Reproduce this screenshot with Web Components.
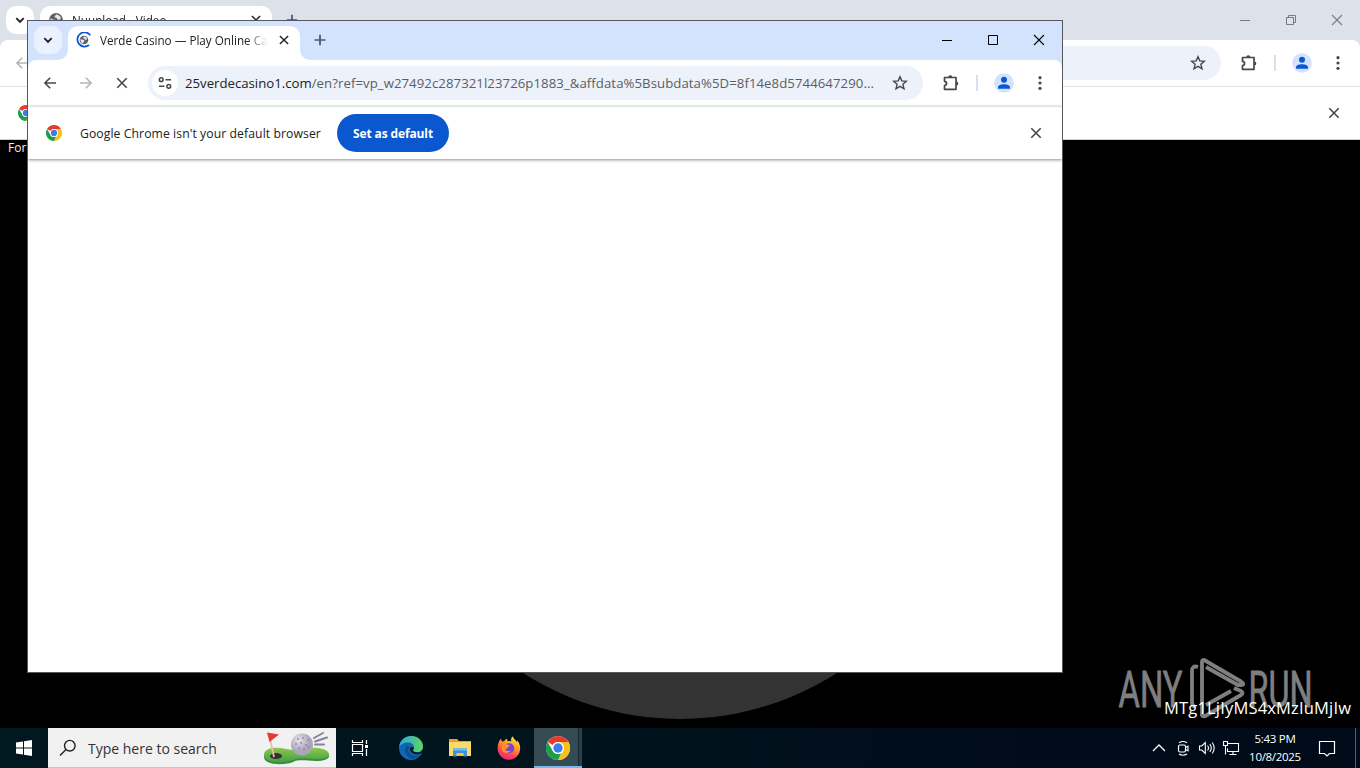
<!DOCTYPE html>
<html lang="en">
<head>
<meta charset="utf-8">
<title>Desktop</title>
<style>
  body { margin: 0; overflow: hidden; background: #000; font-family: "Open Sans", "Noto Sans", sans-serif; }
</style>
</head>
<body>
<desk-top>
  <browser-window class="back" inactive>
    <span slot="title">Nuupload - Video</span>
  </browser-window>
  <browser-window class="front">
    <span slot="title">Verde Casino — Play Online Casino</span>
    <span slot="domain">25verdecasino1.com</span>
    <span slot="path">/en?ref=vp_w27492c287321l23726p1883_&amp;affdata%5Bsubdata%5D=8f14e8d5744647290...</span>
  </browser-window>
  <brand-mark slot="mark"></brand-mark>
  <task-bar slot="bar"></task-bar>
</desk-top>

<script>
const CHROME = `
  <circle cx="12" cy="12" r="12" fill="#fff"/>
  <path fill="#e33b2e" d="M12 0a12 12 0 0 1 10.4 6H12a6 6 0 0 0-5.2 3L1.6 6A12 12 0 0 1 12 0z"/>
  <path fill="#fbc116" d="M22.4 6A12 12 0 0 1 12 24l5.2-9A6 6 0 0 0 17.2 9L12 6z"/>
  <path fill="#1e9e4a" d="M1.6 6l5.2 9A6 6 0 0 0 12 18a6 6 0 0 0 3.5-1L12 24A12 12 0 0 1 1.6 6z"/>
  <circle cx="12" cy="12" r="5.900" fill="#fff"/><circle cx="12" cy="12" r="4.700" fill="#3b7de9"/>`;

const GLOBE = `<circle cx="8" cy="8" r="6.9" fill="#5f6368"/>
  <path fill="#e8eaed" d="M2.5 6.5l3 1.2 2.6.2.6 2.3-1.7 1.5-.3 2.1C4 13 2 10.500 2.500 6.500zM8 2.500c2 .2 4 1.300 5 3.500l-1.700 2-2-.8-.7-1.500-2.200-.4z"/>`;

// [viewBox size, markup]; strokes and fills use currentColor unless the artwork is coloured
const ICONS = {
  chevronDown: [16, '<path d="M4.300 6.200 8 9.900l3.700-3.700" stroke-width="1.900"/>'],
  back: [16, '<path d="M14 8H3M8.200 2.700 2.900 8l5.300 5.300" stroke-width="1.600"/>'],
  forward: [16, '<path d="M2 8h11M7.800 2.700 13.100 8l-5.300 5.300" stroke-width="1.600"/>'],
  close: [16, '<path d="m3.300 3.300 9.400 9.400M12.700 3.300l-9.400 9.400" stroke-width="1.600"/>'],
  plus: [16, '<path d="M8 2.700v10.600M2.700 8h10.600" stroke-width="1.700"/>'],
  tune: [16, '<circle cx="4.200" cy="4.700" r="1.900" stroke-width="1.500"/><path d="M8.500 4.700H14M2 11.300h5.500" stroke-width="1.600"/><circle cx="11.800" cy="11.300" r="1.900" stroke-width="1.500"/>'],
  star: [16, '<path d="m8 1.700 1.800 4.200 4.600.4-3.500 3 1.100 4.500L8 11.400l-4 2.400 1.100-4.500-3.500-3 4.600-.4z" stroke-width="1.400"/>'],
  puzzle: [18, '<path d="M2.500 3.500H14v11.800H2.500v-3.800c2.800-.5 2.800-3.700 0-4.200z" stroke-width="1.700" stroke-linejoin="round"/><path d="M6.300 3.200a2 2 0 0 1 4 0zM14.300 7.400a2 2 0 0 1 0 4z" fill="currentColor" stroke="none"/>'],
  dots: [16, '<g fill="currentColor" stroke="none"><circle cx="8" cy="2.700" r="1.600"/><circle cx="8" cy="8" r="1.600"/><circle cx="8" cy="13.300" r="1.600"/></g>'],
  person: [20, '<g stroke="none"><circle cx="10" cy="10" r="9.800" fill="#d3e3fd"/><circle cx="10" cy="6.800" r="3" fill="#0b57d0"/><path d="M4 15.800v-1.500C4 12 7.500 11.200 10 11.200s6 .8 6 3.100v1.500z" fill="#0b57d0"/></g>'],
  min: [12, '<path d="M1 6.500h10" stroke-width="1"/>'],
  max: [12, '<path d="M1.500 1.500h9v9h-9z" stroke-width="1"/>'],
  restore: [12, '<path d="M1.500 3.500h7v7h-7zM3.500 3.500v-2h7v7h-2" stroke-width="1"/>'],
  exit: [12, '<path d="m1 1 10 10M11 1 1 11" stroke-width="1.100"/>'],
  chrome: [24, `<g stroke="none">${CHROME}</g>`],
  globe: [16, `<g stroke="none">${GLOBE}</g>`],
  loading: [16, `<g stroke="none" transform="translate(3 3) scale(.62)">${GLOBE}</g><path d="M14.200 3.200A7.100 7.100 0 1 0 13 13" stroke="#0b57d0" stroke-width="1.800"/>`],
  windows: [16, '<path fill="currentColor" stroke="none" d="M0 2.400 7 1.400v6.100H0zM8 1.200 16 0v7.500H8zM0 8.500h7v6.100l-7-1zM8 8.500h8V16l-8-1.200z"/>'],
  search: [18, '<circle cx="10.800" cy="6.700" r="5.300" stroke-width="1.400"/><path d="m7 10.500-6 6" stroke-width="1.400"/>'],
  taskView: [18, '<path d="M1.500 1v2.500h10V1M1.500 17v-2.500h10V17M1.500 5.500h10v7h-10zM15.500 1v4M15.500 10v7" stroke-width="1.200"/><path d="M14 6h3v3h-3z" fill="currentColor" stroke="none"/>'],
  edge: [24, `<g stroke="none">
    <linearGradient id="a" x1="0" x2="1"><stop offset="0" stop-color="#2aa8df"/><stop offset="1" stop-color="#61d65b"/></linearGradient>
    <circle cx="12" cy="12" r="12" fill="#1267b5"/>
    <path fill="url(#a)" d="M.1 11C.9 4.500 6 0 12.300 0 19 0 24 5 24 10.500c0 3.500-2.600 5.800-6 5.800-2.500 0-4-.9-4-2 0-.8 1-1.300 1-3C15 8.500 12.500 6.500 9 6.500c-4 0-7.600 2-8.900 4.500z"/>
    <path fill="#0c4f8f" d="M8 9.500c-3.500 2.500-2.800 9 3 12.500 3.700 1.500 8 .2 10.500-3.200-5 2-10.500.7-12-3.300-.6-2-.2-3.500 1-5z"/>
    <path fill="#031c26" d="M11 11.500c-.8 3 1.300 6.200 5.200 6.800 2.800.4 5-.3 6.300-1.200.6-.4 1 .1.600.8 1-1.300 1-3 .8-5-1.200 2.500-3.300 3.400-6 3.400-2.500 0-3.900-.9-3.900-2 0-.8 1-1.300 1-3-2 0-3.500 0-4 .2z"/></g>`],
  folder: [24, `<g stroke="none"><path fill="#e8a317" d="M1 3h8l2 2h12v3H1z"/><path fill="#ffd968" d="M1 6h22v14H1z"/>
    <path fill="#3d93d0" d="M5 12h14v8.500h-3.500V17h-7v3.500H5z"/><path fill="#76bce8" d="M5 12h14v2.500H5z"/><path fill="#f5c343" d="M9 17h6v3H9z"/></g>`],
  firefox: [24, `<g stroke="none">
    <linearGradient id="f" x1=".8" y1="0" x2=".3" y2="1"><stop offset="0" stop-color="#fff04a"/><stop offset=".4" stop-color="#ff9a25"/><stop offset=".75" stop-color="#ff4055"/><stop offset="1" stop-color="#e32a87"/></linearGradient>
    <path fill="url(#f)" d="M4 2.500c0 1.200.4 2 .9 2.700l2.300.1C8 3.800 9 3 10.200 2.700c-.3 1 .1 2 .8 2.500 1.400-.2 2.300-.2 3.300.2C13.500 3.500 14.500 1.200 16 .3c.2 2.500 2.500 3.700 4 5.800.3-.6.300-1.200.2-1.900 1.900 2.200 3 5 3 8A11.300 11.300 0 0 1 .6 12.500C.6 9 1.500 5 4 2.500z"/>
    <circle cx="12.200" cy="12.200" r="5" fill="#7542d8"/>
    <path fill="#ff9328" d="M5.500 8.600c2-1.300 3.500-.7 4.600 0 1.500 0 2.600.2 2.700.8-.1 1-2 1.200-2.300 2-.3 1.400-1.500 1.800-2.800 1.400 1 2.200 3.500 3 6 1.600-1.200 3.200-6 3.500-8 .6C4.500 13 4.300 10.500 5.500 8.600z"/></g>`],
  caret: [16, '<path d="m2 11 6-6 6 6" stroke-width="1.300"/>'],
  camera: [16, '<rect x="3.500" y="5" width="7" height="7" rx="1.500" stroke-width="1.200"/><path d="m10.500 7.500 2.500-1.300v4.600l-2.500-1.300M4 2.700Q8 .2 12 2.700M4 14q4 2.500 8 0" stroke-width="1.100"/>'],
  volume: [18, '<path d="M1.500 7h2.300l3.500-3.500v11L3.800 11H1.500z" stroke-width="1.100"/><path d="M9.500 6.500q2 2.500 0 5M11.800 5q3 4 0 8M14.200 3.500q4 5.500 0 11" stroke-width="1.100"/>'],
  network: [18, '<path d="M5.500 4.500h11v8h-11v-3M11 12.500v3M7.500 15.500h7M1.500 2.500h4v4h-4zM3.500 6.500v9" stroke-width="1.100"/>'],
  message: [18, '<path d="M1.500 2.500h15v12h-5L9 17l-2.500-2.500h-5z" stroke-width="1.200"/>'],
};

class UiIcon extends HTMLElement {
  connectedCallback() {
    const [box, art] = ICONS[this.getAttribute('name')];
    const size = this.getAttribute('size') || box;
    this.attachShadow({ mode: 'open' });
    this.shadowRoot.innerHTML = `
      <style>
        :host { display: inline-flex; flex: none; width: ${size}px; height: ${size}px; }
      </style>
      <svg width="${size}" height="${size}" viewBox="0 0 ${box} ${box}" fill="none" stroke="currentColor">${art}</svg>
    `;
  }
}
customElements.define('ui-icon', UiIcon);

class BrowserWindow extends HTMLElement {
  connectedCallback() {
    const inactive = this.hasAttribute('inactive');
    this.attachShadow({ mode: 'open' });
    this.shadowRoot.innerHTML = `
      <style>
        :host {
          --strip: #d3e3fd;
          display: flex;
          flex-direction: column;
          box-sizing: border-box;
          background: #fff;
          color: #202124;
          overflow: hidden;
        }
        :host([inactive]) { --strip: #dde1e9; --ctl: #777b83; }
        .strip {
          height: 39px;
          flex: none;
          display: flex;
          align-items: flex-end;
          background: var(--strip);
        }
        :host([inactive]) .strip { height: 40px; }
        .find {
          width: 28px;
          height: 28px;
          margin: 0 6px;
          margin-bottom: 6px;
          border-radius: 10px;
          background: #ebf1fe;
          display: flex;
          align-items: center;
          justify-content: center;
        }
        :host([inactive]) .find { background: #fff; }
        .tab {
          position: relative;
          box-sizing: border-box;
          width: 232px;
          height: 34px;
          padding: 0 8px 6px;
          display: flex;
          align-items: center;
          background: #fff;
          border-radius: 10px 10px 0 0;
          font-size: 11.700px;
        }
        /* the tab's foot flares out into the toolbar */
        .tab::before, .tab::after {
          content: '';
          position: absolute;
          bottom: 0;
          width: 10px;
          height: 10px;
        }
        .tab::before { right: 100%; background: radial-gradient(circle at 0 0, transparent 9.500px, #fff 10px); }
        .tab::after { left: 100%; background: radial-gradient(circle at 100% 0, transparent 9.500px, #fff 10px); }
        .title {
          width: 168px;
          margin-left: 8px;
          overflow: hidden;
          white-space: nowrap;
          -webkit-mask-image: linear-gradient(90deg, #000 146px, transparent 168px);
          mask-image: linear-gradient(90deg, #000 146px, transparent 168px);
        }
        .shut { margin-left: 9px; }
        .add { margin: 0 0 12px 12px; color: #44546f; }
        .controls {
          margin-left: auto;
          height: 38px;
          align-self: flex-start;
          display: flex;
          align-items: center;
          color: var(--ctl, #000);
        }
        :host([inactive]) .controls { height: 40px; }
        .controls span { width: 46px; display: flex; justify-content: center; }
        .sheet {
          flex: none;
          background: var(--strip);
        }
        .toolbar {
          height: 46px;
          box-sizing: border-box;
          padding: 0 14px;
          display: flex;
          align-items: center;
          color: #474747;
          background: #fff;
          border-radius: 8px 8px 0 0;
        }
        .nav { display: flex; gap: 20px; }
        .nav .off { color: #b4b5b8; }
        .box {
          flex: 1;
          min-width: 0;
          height: 34px;
          margin: 0 19px 0 18px;
          padding: 0 15px 0 4px;
          border-radius: 17px;
          background: #edf1fa;
          display: flex;
          align-items: center;
          box-sizing: border-box;
          font-size: 13.200px;
          letter-spacing: .065px;
        }
        .site {
          width: 26px;
          height: 26px;
          margin-right: 7px;
          border-radius: 50%;
          background: #fff;
          display: flex;
          align-items: center;
          justify-content: center;
        }
        .url { flex: 1; white-space: nowrap; color: #5a5e64; }
        .url .domain { color: #202124; letter-spacing: 0; }
        .sep { width: 2px; height: 16px; margin: 0 16px; background: #d3e0f8; }
        :host([inactive]) .sep { background: #dcdfe5; }
        .menu { margin-left: 18px; }
        .info {
          height: 53px;
          flex: none;
          box-sizing: border-box;
          padding: 0 18px;
          display: flex;
          align-items: center;
          border-top: 1px solid #e0e2e0;
          font-size: 12.200px;
        }
        :host(:not([inactive])) .info { box-shadow: 0 1px 3px rgba(0, 0, 0, .45); }
        .info .ask { width: 241px; margin-left: 18px; white-space: nowrap; letter-spacing: .08px; }
        button {
          width: 112px;
          height: 38px;
          padding: 0;
          margin-left: 16px;
          border: 0;
          border-radius: 19px;
          background: #0b57d0;
          color: #fff;
          font: 700 12px "Open Sans", sans-serif;
          letter-spacing: -.12px;
        }
        .info .dismiss { margin-left: auto; color: #474747; }
      </style>
      <div class="strip">
        <div class="find"><ui-icon name="chevronDown"></ui-icon></div>
        <div class="tab">
          <ui-icon name="${inactive ? 'globe' : 'loading'}"></ui-icon>
          <div class="title"><slot name="title"></slot></div>
          <ui-icon class="shut" name="close" size="14"></ui-icon>
        </div>
        <ui-icon class="add" name="plus"></ui-icon>
        <div class="controls">
          <span><ui-icon name="min"></ui-icon></span>
          <span><ui-icon name="${inactive ? 'restore' : 'max'}"></ui-icon></span>
          <span><ui-icon name="exit"></ui-icon></span>
        </div>
      </div>
      <div class="sheet">
        <div class="toolbar">
          <div class="nav">
            <ui-icon name="back" class="${inactive ? 'off' : ''}"></ui-icon>
            <ui-icon name="forward" class="off"></ui-icon>
            <ui-icon name="close"></ui-icon>
          </div>
          <div class="box">
            <div class="site"><ui-icon name="tune"></ui-icon></div>
            <div class="url"><span class="domain"><slot name="domain"></slot></span><slot name="path"></slot></div>
            <ui-icon name="star"></ui-icon>
          </div>
          <ui-icon name="puzzle"></ui-icon>
          <div class="sep"></div>
          <ui-icon name="person"></ui-icon>
          <ui-icon class="menu" name="dots"></ui-icon>
        </div>
      </div>
      <div class="info">
        <ui-icon name="chrome" size="16"></ui-icon>
        <span class="ask">Google Chrome isn't your default browser</span>
        <button>Set as default</button>
        <ui-icon class="dismiss" name="close"></ui-icon>
      </div>
    `;
  }
}
customElements.define('browser-window', BrowserWindow);

class BrandMark extends HTMLElement {
  connectedCallback() {
    this.attachShadow({ mode: 'open' });
    this.shadowRoot.innerHTML = `
      <style>
        :host { display: block; width: 240px; height: 70px; }
        svg { display: block; overflow: visible; }
        .name { font-family: Roboto, sans-serif; font-size: 50px; fill: #7f7f7f; stroke: #7f7f7f; stroke-width: .8px; }
        .code { font-size: 16.500px; fill: #fff; }
      </style>
      <svg width="240" height="70" viewBox="1120 655 240 70">
        <text class="name" x="1118.500" y="707" textLength="64" lengthAdjust="spacingAndGlyphs">ANY</text>
        <text class="name" x="1248.500" y="707" textLength="64" lengthAdjust="spacingAndGlyphs">RUN</text>
        <g fill="none" stroke="#7f7f7f" stroke-width="3.800" stroke-linejoin="round">
          <path d="M1198 667q-6-2-6 4v31q0 4 3 5"/>
          <path d="M1202 716V662q0-3 3-1.500l36 21q4 3 1 3.500h-4l-32-18"/>
          <path d="M1234 688l7 3q3 2 0 4l-34 20q-5 3-5-1M1206 705l25-14"/>
        </g>
        <text class="code" x="1164" y="714" textLength="187" lengthAdjust="spacing">MTg1LjIyMS4xMzIuMjIw</text>
      </svg>
    `;
  }
}
customElements.define('brand-mark', BrandMark);

class GolfArt extends HTMLElement {
  connectedCallback() {
    this.attachShadow({ mode: 'open' });
    this.shadowRoot.innerHTML = `
      <style>:host { display: block; width: 68px; height: 36px; }</style>
      <svg width="68" height="36" viewBox="0 0 68 36">
        <linearGradient id="g" x2="0" y2="1"><stop offset="0" stop-color="#8bc84a"/><stop offset="1" stop-color="#43a047"/></linearGradient>
        <radialGradient id="b" cx=".35" cy=".3"><stop offset="0" stop-color="#e6e3ee"/><stop offset="1" stop-color="#aaa5b9"/></radialGradient>
        <path fill="#388e3c" d="M1 27C1 20 9 18 17 19s14 3 22 1 22-2 26 3-3 8-12 8-17-2-23 1S1 36 1 27z"/>
        <path fill="url(#g)" d="M1 25c0-6 8-8 16-7s14 3 22 1 22-2 26 3-3 7-12 7-17-2-23 1S1 34 1 25z"/>
        <ellipse cx="13" cy="26" rx="6" ry="3" fill="#3c2a35"/>
        <path d="m6 4 5 23" stroke="#e9b8ae" stroke-width="1.800"/>
        <path fill="#e53935" d="M4 2.500 16 4.500 6.500 12z"/>
        <circle cx="39" cy="14.500" r="11" fill="url(#b)"/>
        <g fill="#8f8a9f"><circle cx="35" cy="9" r="1"/><circle cx="40" cy="8" r="1"/><circle cx="45" cy="10" r="1"/><circle cx="33" cy="14" r="1"/><circle cx="38" cy="13" r="1"/><circle cx="43" cy="15" r="1"/><circle cx="36" cy="18" r="1"/><circle cx="41" cy="19" r="1"/><circle cx="46" cy="17" r="1"/></g>
        <path d="m51 8 9-5M52 11.500l12-4M52 14.500l9 0" stroke="#85829f" stroke-width="2" stroke-linecap="round"/>
      </svg>
    `;
  }
}
customElements.define('golf-art', GolfArt);

class TaskBar extends HTMLElement {
  connectedCallback() {
    this.attachShadow({ mode: 'open' });
    this.shadowRoot.innerHTML = `
      <style>
        :host {
          display: flex;
          height: 40px;
          background: linear-gradient(90deg, #001820, #00131d 45%, #000b1a 80%);
          color: #fff;
        }
        .slot { width: 48px; display: flex; align-items: center; justify-content: center; }
        .search {
          width: 288px;
          box-sizing: border-box;
          padding: 0 5px 0 11px;
          display: flex;
          align-items: center;
          background: #f1f1f1;
          border-bottom: 1px solid #c4c4c4;
          font-size: 14px;
          color: #222;
        }
        .search span { margin-left: 11px; padding-top: 2px; flex: 1; color: #333; white-space: nowrap; }
        .apps { margin-left: 3px; display: flex; gap: 1px; }
        .on {
          box-sizing: border-box;
          border-bottom: 2px solid #76b9ed;
          padding-top: 2px;
          background: linear-gradient(90deg, #344b53 44px, #14282f 44px, #14282f 45px, #2a4047 45px);
        }
        .tray { margin-left: auto; display: flex; align-items: center; }
        .tray .cell { width: 24px; display: flex; justify-content: center; }
        .clock { width: 64px; text-align: center; font-size: 11.500px; line-height: 18px; letter-spacing: -.3px; white-space: nowrap; }
        .note { width: 40px; display: flex; justify-content: center; }
        .edge { width: 1px; height: 40px; margin: 0 4px 0 8px; background: #565d6a; }
      </style>
      <div class="slot"><ui-icon name="windows"></ui-icon></div>
      <div class="search">
        <ui-icon name="search"></ui-icon>
        <span>Type here to search</span>
        <golf-art></golf-art>
      </div>
      <div class="slot"><ui-icon name="taskView"></ui-icon></div>
      <div class="apps">
        <div class="slot"><ui-icon name="edge"></ui-icon></div>
        <div class="slot"><ui-icon name="folder"></ui-icon></div>
        <div class="slot"><ui-icon name="firefox"></ui-icon></div>
        <div class="slot on"><ui-icon name="chrome"></ui-icon></div>
      </div>
      <div class="tray">
        <div class="cell"><ui-icon name="caret"></ui-icon></div>
        <div class="cell"><ui-icon name="camera"></ui-icon></div>
        <div class="cell"><ui-icon name="volume"></ui-icon></div>
        <div class="cell"><ui-icon name="network"></ui-icon></div>
        <div class="clock">5:43 PM<br>10/8/2025</div>
        <div class="note"><ui-icon name="message"></ui-icon></div>
        <div class="edge"></div>
      </div>
    `;
  }
}
customElements.define('task-bar', TaskBar);

class DeskTop extends HTMLElement {
  connectedCallback() {
    this.attachShadow({ mode: 'open' });
    this.shadowRoot.innerHTML = `
      <style>
        :host { display: flex; flex-direction: column; position: relative; height: 768px; width: 1360px; background: #000; overflow: hidden; }
        .area { flex: 1; position: relative; overflow: hidden; }
        .disc { position: absolute; left: 390px; top: 139px; width: 580px; height: 580px; border-radius: 50%; background: #333; }
        .hint { position: absolute; left: 8px; top: 140px; color: #eee; font-size: 12px; line-height: 16px; }
        ::slotted(browser-window.back) { position: absolute; left: 0; top: 0; width: 1360px; height: 140px; border-bottom: 1px solid #d0d0d0; }
        ::slotted(browser-window.front) { position: absolute; left: 27px; top: 20px; width: 1036px; height: 653px; border: 1px solid #55585e; }
        ::slotted(brand-mark) { position: absolute; left: 1120px; top: 655px; }
      </style>
      <div class="area">
        <div class="disc"></div>
        <div class="hint">For</div>
        <slot></slot>
        <slot name="mark"></slot>
      </div>
      <slot name="bar"></slot>
    `;
  }
}
customElements.define('desk-top', DeskTop);
</script>
</body>
</html>
